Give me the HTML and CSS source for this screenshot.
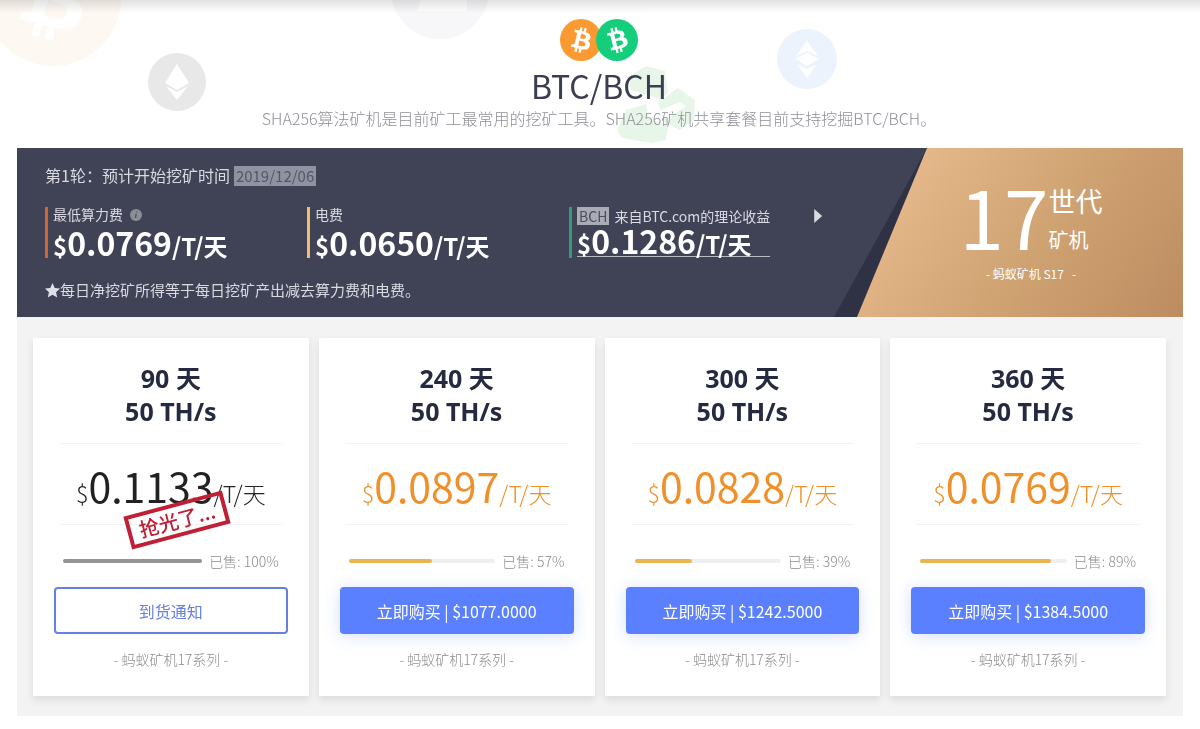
FILE: index.html
```html
<!DOCTYPE html>
<html lang="zh-CN">
<head>
<meta charset="utf-8">
<meta name="viewport" content="width=device-width, initial-scale=1">
<title>BTC/BCH</title>
<link rel="stylesheet" href="styles.css">
</head>
<body>
<svg class="defs" width="0" height="0" aria-hidden="true">
  <symbol id="coin-b" viewBox="0 0 32 32"><path d="M23.189 14.02c.314-2.096-1.283-3.223-3.465-3.975l.708-2.84-1.728-.43-.69 2.765c-.454-.114-.92-.22-1.385-.326l.695-2.783L15.596 6l-.708 2.839c-.376-.086-.746-.17-1.104-.26l.002-.009-2.384-.595-.46 1.846s1.283.294 1.256.312c.7.175.826.638.805 1.006l-.806 3.235c.048.012.11.03.18.057l-.183-.045-1.13 4.532c-.086.212-.303.531-.793.41.018.025-1.256-.313-1.256-.313l-.858 1.978 2.25.561c.418.105.828.215 1.231.318l-.715 2.872 1.727.43.708-2.84c.472.127.93.245 1.378.357l-.706 2.828 1.728.43.715-2.866c2.948.558 5.164.333 6.097-2.333.752-2.146-.037-3.385-1.588-4.192 1.13-.26 1.98-1.003 2.207-2.538zm-3.95 5.538c-.533 2.147-4.148.986-5.32.695l.95-3.805c1.172.293 4.929.872 4.37 3.11zm.535-5.569c-.487 1.953-3.495.96-4.47.717l.86-3.45c.975.243 4.118.696 3.61 2.733z"/></symbol>
</svg>
<header class="hero">
  <svg class="deco deco-btc" viewBox="0 0 32 32" aria-hidden="true"><circle cx="16" cy="16" r="16" fill="#fdf8f1"/><use href="#coin-b" fill="#fff"/></svg>
  <svg class="deco deco-ltc" viewBox="0 0 98 98" aria-hidden="true"><circle cx="49" cy="49" r="49" fill="#f7f7f9"/><path d="M44 18h13L45 59h31v11H26z" fill="#fff"/></svg>
  <svg class="deco deco-eth" viewBox="0 0 58 58" aria-hidden="true"><circle cx="29" cy="29" r="29" fill="#e8e8e8"/><path d="M29 11l12 19-12 7-12-7zM18 33l11 6 11-6-11 14z" fill="#fff"/></svg>
  <svg class="deco deco-eth-blue" viewBox="0 0 60 60" aria-hidden="true"><circle cx="30" cy="30" r="30" fill="#edf3fd"/><path d="M30 12l11 15-11-5-11 5zM30 24l12 6-12 7-12-7zM20 35l10 5 10-5-10 14z" fill="#fff"/></svg>
  <svg class="deco deco-green" viewBox="0 0 80 80" aria-hidden="true"><path d="M14 12L30 2l19 5 3 22-8 7-14-6-16-4zM42 38l20-14 17 12-1 20-14 10-16-8zM10 46l20-6 2 14 20 8-2 14-14 3-30-5-5-8z" fill="#e8f6e9"/><path d="M42 47l22-9 6 4-19 13z" fill="#fff"/></svg>
  <div class="coins">
    <svg class="coin" viewBox="0 0 32 32" role="img" aria-label="BTC"><circle cx="16" cy="16" r="16" fill="#fb9a30"/><use href="#coin-b" fill="#fff"/></svg>
    <svg class="coin" viewBox="0 0 32 32" role="img" aria-label="BCH"><circle cx="16" cy="16" r="16" fill="#14ce7c"/><use href="#coin-b" fill="#fff" transform="rotate(-28 16 16)"/></svg>
  </div>
  <h1 class="hero-title">BTC/BCH</h1>
  <p class="hero-text">SHA256算法矿机是目前矿工最常用的挖矿工具。SHA256矿机共享套餐目前支持挖掘BTC/BCH。</p>
</header>
<main class="content">
  <section class="banner">
    <div class="banner-info">
      <p class="round">第1轮：预计开始挖矿时间<time class="tag" datetime="2019-12-06">2019/12/06</time></p>
      <div class="metrics">
        <div class="metric metric-red">
          <p class="metric-label">最低算力费 <svg class="info" viewBox="0 0 12 12" aria-hidden="true"><circle cx="6" cy="6" r="6" fill="#8b8d98"/><path d="M6.3 2.5h1v1.2h-1zM5.4 5h1.5l-.8 4H4.9z" fill="#4c4f60"/></svg></p>
          <p class="metric-value"><small>$</small>0.0769<small>/T/天</small></p>
        </div>
        <div class="metric metric-yellow">
          <p class="metric-label">电费</p>
          <p class="metric-value"><small>$</small>0.0650<small>/T/天</small></p>
        </div>
        <div class="metric metric-green">
          <a class="metric-link" href="#"><span class="metric-label"><span class="tag tag-small">BCH</span> 来自BTC.com的理论收益</span><span class="metric-value"><small>$</small>0.1286<small>/T/天</small></span></a>
          <button class="next" type="button" aria-label="下一个"></button>
        </div>
      </div>
      <p class="note"><svg class="star" viewBox="0 0 16 16" aria-hidden="true"><path d="M8 0l2.400 5.300 5.600.6-4.200 3.900 1.200 5.700L8 12.600l-5 2.900 1.200-5.700L0 5.900l5.600-.6z" fill="#dfe0e7"/></svg>每日净挖矿所得等于每日挖矿产出减去算力费和电费。</p>
    </div>
    <div class="banner-edge">
      <div class="generation">
        <div class="gen-main"><span class="gen-number">17</span><span class="gen-words"><span class="gen-big">世代</span><span class="gen-small">矿机</span></span></div>
        <p class="gen-model">- 蚂蚁矿机 S17 &nbsp; -</p>
      </div>
    </div>
  </section>
  <section class="plans">
    <article class="card sold-out">
      <h2 class="card-title">90 天<br>50 TH/s</h2>
      <div class="price"><small>$</small>0.1133<small>/T/天</small><span class="stamp">抢光了...</span></div>
      <div class="sold"><div class="track"><div class="fill" style="width:100%"></div></div><span>已售: 100%</span></div>
      <button class="buy notify" type="button">到货通知</button>
      <p class="series">- 蚂蚁矿机17系列 -</p>
    </article>
    <article class="card">
      <h2 class="card-title">240 天<br>50 TH/s</h2>
      <div class="price"><small>$</small>0.0897<small>/T/天</small></div>
      <div class="sold"><div class="track"><div class="fill" style="width:57%"></div></div><span>已售: 57%</span></div>
      <button class="buy" type="button">立即购买 | $1077.0000</button>
      <p class="series">- 蚂蚁矿机17系列 -</p>
    </article>
    <article class="card">
      <h2 class="card-title">300 天<br>50 TH/s</h2>
      <div class="price"><small>$</small>0.0828<small>/T/天</small></div>
      <div class="sold"><div class="track"><div class="fill" style="width:39%"></div></div><span>已售: 39%</span></div>
      <button class="buy" type="button">立即购买 | $1242.5000</button>
      <p class="series">- 蚂蚁矿机17系列 -</p>
    </article>
    <article class="card">
      <h2 class="card-title">360 天<br>50 TH/s</h2>
      <div class="price"><small>$</small>0.0769<small>/T/天</small></div>
      <div class="sold"><div class="track"><div class="fill" style="width:89%"></div></div><span>已售: 89%</span></div>
      <button class="buy" type="button">立即购买 | $1384.5000</button>
      <p class="series">- 蚂蚁矿机17系列 -</p>
    </article>
  </section>
</main>
</body>
</html>
```
FILE: styles.css
```css
* { box-sizing: border-box; }
body {
  margin: 0;
  background: #fff;
  color: #222;
  font-family: "Noto Sans CJK SC", "Noto Sans", sans-serif;
  font-size: 16px;
}
h1, h2, p { margin: 0; }
.defs { position: absolute; }

/* header */
.hero {
  position: relative;
  overflow: hidden;
  display: flex;
  flex-direction: column;
  align-items: center;
  padding: 19px 18px 21px 16px;
  background: linear-gradient(#e2e2e3, #ebebec 4px, #fff 13px);
}
.deco { position: absolute; mix-blend-mode: multiply; }
.deco-btc { left: -15px; top: -70px; width: 136px; }
.deco-ltc { left: 391px; top: -59px; width: 98px; }
.deco-eth { left: 148px; top: 53px; width: 58px; }
.deco-eth-blue { left: 777px; top: 29px; width: 60px; }
.deco-green { left: 616px; top: 64px; width: 80px; }
.coins { position: relative; display: flex; }
.coin { width: 42px; height: 42px; }
.coin + .coin { margin-left: -6px; }
.hero-title {
  position: relative;
  color: #3b3d50;
  font-size: 32px;
  font-weight: 400;
  line-height: 48px;
}
.hero-text {
  position: relative;
  color: #8f9099;
  font-size: 16px;
  font-weight: 300;
  line-height: 18px;
}

/* banner */
.content { padding: 0 17px; }
.banner {
  display: flex;
  background: #404256;
  color: #d9dae2;
}
.banner-info { flex: 1; padding: 15px 0 15px 28px; }
.round { font-size: 16px; line-height: 24px; }
.note { font-size: 15px; line-height: 24px; }
.tag {
  display: inline-block;
  margin-left: 4px;
  padding: 0 2px;
  background: #8f92a1;
  color: #54566a;
  font-size: 15px;
  line-height: 20px;
}
.tag-small {
  margin: 0 2px 0 0;
  background: #a9abb5;
  color: #4c4e5f;
  font-size: 14px;
  line-height: 18px;
}
.metrics {
  display: grid;
  grid-template-columns: 262px 262px 1fr;
  padding: 20px 0 20px;
}
.metric {
  display: flex;
  flex-direction: column;
  height: 51px;
  padding-left: 5px;
  border-left: 3px solid;
}
.metric-red { border-color: #d9602f; }
.metric-yellow { border-color: #f0c070; }
.metric-green { flex-direction: row; align-items: flex-start; border-color: #2f9e7b; }
.metric-label {
  display: block;
  color: #d9dae2;
  font-size: 14px;
  line-height: 15px;
}
.metric-value {
  display: block;
  color: #fff;
  font-size: 32px;
  font-weight: 700;
  line-height: 40px;
}
.metric-value small { font-size: 24px; line-height: 1; }
.metric-link {
  border-bottom: 1px solid #b9bac4;
  color: inherit;
  text-decoration: none;
}
.metric-link .metric-label { line-height: 18px; }
.metric-link .metric-value { line-height: 30px; }
.next {
  width: 8px;
  height: 14px;
  margin: 2px 0 0 44px;
  padding: 0;
  border: 0;
  background: #d9dae2;
  clip-path: polygon(0 0, 100% 50%, 0 100%);
}
.info { width: 12px; height: 12px; margin-left: 4px; vertical-align: -1px; }
.star { width: 15px; height: 15px; vertical-align: -2px; }
.banner-edge {
  flex: none;
  padding-left: 23px;
  background: #2f3245;
  clip-path: polygon(93px 0, 100% 0, 100% 100%, 0 100%);
}
.generation {
  display: flex;
  flex-direction: column;
  align-items: center;
  width: 326px;
  height: 100%;
  padding: 32px 0 0 22px;
  background: linear-gradient(125deg, #e4b88a 15%, #d0a373 55%, #bc8c60);
  clip-path: polygon(70px 0, 100% 0, 100% 100%, 0 100%);
  color: #fff;
}
.gen-main { display: flex; align-items: flex-start; }
.gen-number { font-size: 80px; line-height: 70px; }
.gen-words { display: flex; flex-direction: column; }
.gen-big { font-size: 27px; line-height: 42px; }
.gen-small { font-size: 20px; line-height: 36px; }
.gen-model { font-size: 12px; line-height: 20px; padding-top: 6px; }

/* plan cards */
.plans {
  display: grid;
  grid-template-columns: repeat(4, 1fr);
  gap: 10px;
  padding: 21px 17px 20px 16px;
  background: #f3f3f3;
}
.card {
  padding: 24px 21px 26px;
  background: #fff;
  box-shadow: 0 4px 8px #0000001a;
  text-align: center;
}
.card-title {
  margin: 0 6px;
  padding-bottom: 15px;
  border-bottom: 1px solid #f2f2f2;
  color: #252a41;
  font-family: "Noto Sans", "Noto Sans CJK SC", sans-serif;
  font-size: 25px;
  font-weight: 700;
  line-height: 33px;
}
.price {
  position: relative;
  margin: 0 6px;
  padding: 11px 0 9px;
  border-bottom: 1px solid #f2f2f2;
  color: #f0902a;
  font-size: 41px;
  font-weight: 400;
  line-height: 60px;
}
.price small { font-size: 23px; font-weight: 300; line-height: 1; }
.sold-out .price { color: #222; }
.stamp {
  position: absolute;
  left: 66px;
  top: 59px;
  width: 102px;
  border: 4px solid #c01f35;
  color: #c01f35;
  font-size: 20px;
  font-weight: 500;
  line-height: 26px;
  transform: rotate(-15deg);
}
.sold {
  display: flex;
  align-items: center;
  gap: 7px;
  padding: 25px 9px 15px;
  color: #8c8c8c;
  font-size: 14px;
  font-weight: 300;
  line-height: 22px;
}
.track { flex: 1; height: 4px; border-radius: 2px; background: #eeeff0; }
.fill { height: 4px; border-radius: 2px; background: #e9b552; }
.sold-out .fill { background: #949494; }
.buy {
  display: block;
  width: 100%;
  height: 47px;
  border: 0;
  border-radius: 4px;
  background: #5b80ff;
  box-shadow: 0 2px 16px #5b80ff40;
  color: #fff;
  font: inherit;
  font-size: 16px;
}
.notify {
  border: 2px solid #6680e0;
  background: #fff;
  box-shadow: none;
  color: #6680e0;
}
.series {
  padding-top: 14px;
  color: #8c8c8c;
  font-size: 14px;
  font-weight: 300;
  line-height: 22px;
}
```
